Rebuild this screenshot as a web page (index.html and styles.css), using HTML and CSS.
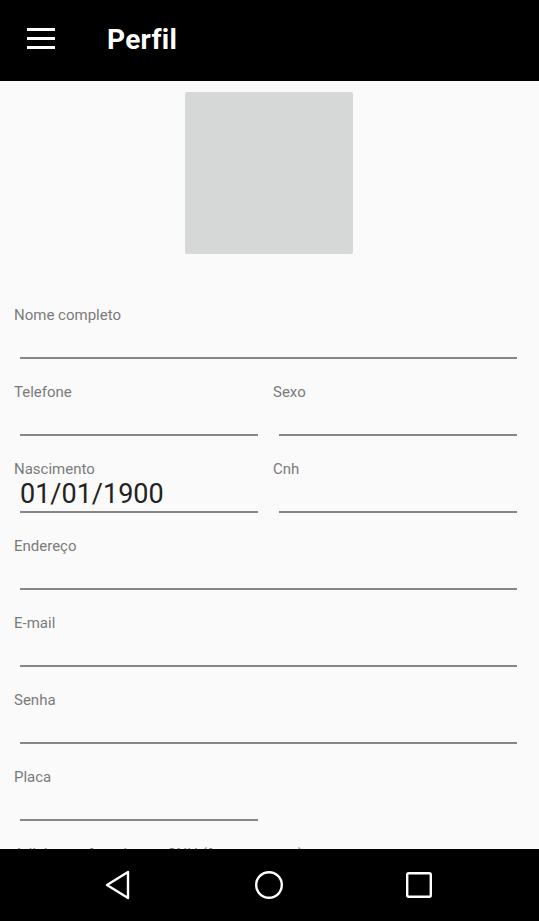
FILE: index.html
```html
<!DOCTYPE html>
<html lang="pt">
<head>
<meta charset="utf-8">
<title>Perfil</title>
<link rel="stylesheet" href="styles.css">
</head>
<body>
<header class="appbar">
  <svg class="menu" width="28" height="22" viewBox="0 0 28 22">
    <rect x="0" y="0" width="28" height="3" fill="#fff"/>
    <rect x="0" y="9" width="28" height="3" fill="#fff"/>
    <rect x="0" y="18" width="28" height="3" fill="#fff"/>
  </svg>
  <h1 class="title">Perfil</h1>
</header>
<main class="content">
  <div class="photo"></div>
  <form class="form">
    <div class="field wide"><label>Nome completo</label><div class="input"></div></div>
    <div class="field"><label>Telefone</label><div class="input"></div></div>
    <div class="field"><label>Sexo</label><div class="input"></div></div>
    <div class="field"><label>Nascimento</label><div class="input">01/01/1900</div></div>
    <div class="field"><label>Cnh</label><div class="input"></div></div>
    <div class="field wide"><label>Endereço</label><div class="input"></div></div>
    <div class="field wide"><label>E-mail</label><div class="input"></div></div>
    <div class="field wide"><label>Senha</label><div class="input"></div></div>
    <div class="field"><label>Placa</label><div class="input"></div></div>
    <div class="field wide"><label>Adicione a foto da sua CNH (frente e verso)</label><div class="input"></div></div>
  </form>
</main>
<nav class="navbar">
  <svg width="28" height="30" viewBox="0 0 28 30"><path d="M24 2 L3 15 L24 28 Z" fill="none" stroke="#fff" stroke-width="2.4" stroke-linejoin="round"/></svg>
  <svg width="30" height="30" viewBox="0 0 30 30"><circle cx="15" cy="15" r="12.8" fill="none" stroke="#fff" stroke-width="2.4"/></svg>
  <svg width="28" height="28" viewBox="0 0 28 28"><rect x="2.2" y="2.2" width="23.6" height="23.6" rx="1.5" fill="none" stroke="#fff" stroke-width="2.4"/></svg>
</nav>
</body>
</html>
```
FILE: styles.css
```css
html, body {
  margin: 0;
  padding: 0;
  height: 100%;
  overflow: hidden;
  background: #fafafa;
  font-family: Roboto, "Noto Sans", "Liberation Sans", sans-serif;
}

.appbar {
  height: 81px;
  background: #000;
  display: flex;
  align-items: center;
  padding-left: 27px;
  box-sizing: border-box;
}

.menu {
  display: block;
  margin-top: -4px;
}

.title {
  margin: 0 0 2px 52px;
  color: #fff;
  font-size: 28px;
  font-weight: 700;
  line-height: 32px;
  letter-spacing: 0.3px;
}

.content {
  display: flex;
  flex-direction: column;
  align-items: center;
}

.photo {
  width: 168px;
  height: 162px;
  margin: 11px 1px 0 0;
  background: #d6d8d7;
  border-radius: 2px;
}

.form {
  align-self: stretch;
  display: grid;
  grid-template-columns: 245px 245px;
  column-gap: 14px;
  row-gap: 24px;
  padding: 52px 21px 0 14px;
}

.field {
  display: flex;
  flex-direction: column;
}

.field.wide {
  grid-column: 1 / 3;
}

.field label {
  font-size: 15px;
  line-height: 18px;
  color: #7a7a7a;
}

.input {
  margin: 0 1px 0 6px;
  padding: 3px 0 4px 0;
  border-bottom: 2px solid #878787;
  font-size: 27px;
  line-height: 26px;
  color: #222;
  box-sizing: content-box;
  height: 26px;
}

.navbar {
  position: fixed;
  left: 0;
  right: 0;
  bottom: 0;
  height: 72px;
  background: #000;
  display: flex;
  align-items: center;
  justify-content: space-between;
  padding: 0 106px 0 104px;
  box-sizing: border-box;
}

.navbar svg {
  display: block;
}
```
